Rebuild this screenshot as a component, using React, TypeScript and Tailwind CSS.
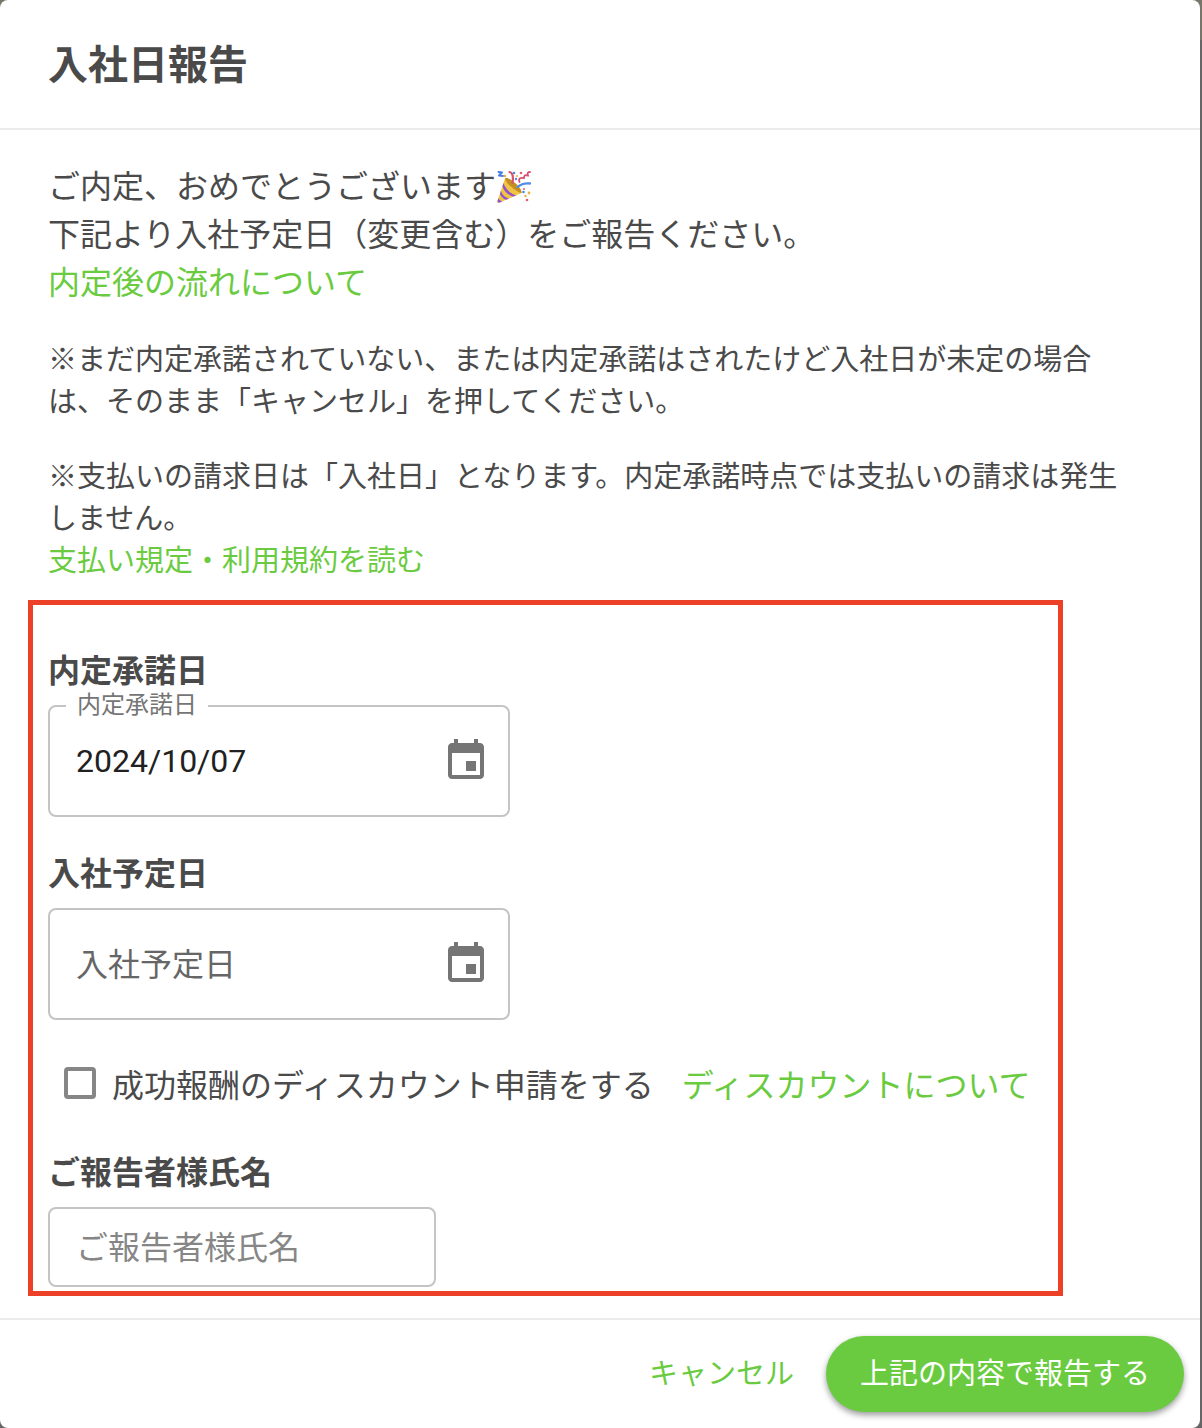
import { useState } from "react";
import type { ReactNode } from "react";

function CalendarIcon() {
  return (
    <svg viewBox="0 0 24 24" className="size-12 fill-[#757575]" aria-hidden="true">
      <path d="M12 12h5v5h-5zM19 3h-1V1h-2v2H8V1H6v2H5c-1.11 0-2 .9-2 2v14c0 1.1.89 2 2 2h14c1.1 0 2-.9 2-2V5c0-1.1-.9-2-2-2zm0 16H5V8h14v11z" />
    </svg>
  );
}

function PartyPopper() {
  return (
    <svg viewBox="0 0 36 36" className="inline-block size-9 align-[-6px]" role="img" aria-label="クラッカー">
      <path d="M1.5 33 9 10.5C10 8.500 26 20 25.500 25L4 34.500C2 35 1 34.500 1.500 33Z" fill="#f0c544" />
      <path d="M9 10.500C11 7 27 20 25.500 25C22 25 9 15 9 10.500Z" fill="#c58f22" />
      <path d="M7.500 15C9 20 14 26 20.500 27.300L17.500 28.600C12 27.500 7.500 22.500 6.500 18.200Z" fill="#9050cf" />
      <path d="M4.900 22.800C6 26.500 9 30 13.300 30.500L10.300 31.800C7.500 31 5 28.500 3.900 26Z" fill="#9050cf" />
      <path d="M2.500 30C3.300 31.800 4.500 33 6.500 33.500L3.500 34.600C1.800 34.800 1.200 33.500 1.700 32.500Z" fill="#9050cf" />
      <path d="M13.500 4C17 4.500 17.500 10 16.500 15" fill="none" stroke="#dc5368" strokeWidth="2.200" strokeLinecap="round" />
      <path d="M21.500 19C25 16 29 15 34 15.500" fill="none" stroke="#4e8fe6" strokeWidth="2.300" strokeLinecap="round" />
      <path d="M2.500 4 6 4.500 3 7.500 7 8" fill="none" stroke="#477fe0" strokeWidth="2" strokeLinecap="round" strokeLinejoin="round" />
      <path d="M23.500 14C22 10 25 9.500 28 10C28 6 30 7.500 32 7.500C31 5 32 4 34 4" fill="none" stroke="#d94f73" strokeWidth="1.800" strokeLinecap="round" />
      <g fill="#e25d6d">
        <circle cx="31" cy="32" r="1.300" />
        <circle cx="25" cy="5" r="1.300" />
        <circle cx="28" cy="21" r="1" />
      </g>
      <g fill="#e7b33f">
        <circle cx="9" cy="8" r="1.300" />
        <circle cx="33" cy="25" r="1.400" />
        <circle cx="29.500" cy="28" r="1.200" />
        <circle cx="21" cy="8" r="1" />
      </g>
      <g fill="#4e8be0">
        <circle cx="18" cy="5" r="1.300" />
        <circle cx="20" cy="11" r="1.200" />
        <circle cx="27.500" cy="24" r="1.300" />
      </g>
    </svg>
  );
}

function TextLink({ children }: { children: ReactNode }) {
  return (
    <a href="#" className="text-[#6acb40] hover:underline">
      {children}
    </a>
  );
}

type DateFieldProps = {
  id: string;
  label: string;
  value: string;
  onChange: (value: string) => void;
};

function DateField({ id, label, value, onChange }: DateFieldProps) {
  return (
    <div>
      <h2 className="text-[32px] leading-10 font-bold">{label}</h2>
      <div className="relative mt-[17px] flex h-28 w-[462px] items-center rounded-lg border-2 border-[#c4c4c4] pr-[18px] pl-[26px]">
        {/* floats up onto the border once the field has a value */}
        <label
          htmlFor={id}
          className={
            value
              ? "absolute -top-[18px] left-4 bg-white px-[11px] text-2xl leading-7 text-[#757575]"
              : "absolute top-7 left-[26px] text-[32px] leading-12 text-[#666666]"
          }
        >
          {label}
        </label>
        <input
          id={id}
          type="text"
          value={value}
          onChange={(e) => onChange(e.target.value)}
          className="h-12 min-w-0 flex-1 font-[Roboto,'Noto_Sans_CJK_JP',sans-serif] text-[32px] text-[#212121] outline-none"
        />
        <button type="button" aria-label={`${label}を選択`}>
          <CalendarIcon />
        </button>
      </div>
    </div>
  );
}

export default function App() {
  const [acceptedDate, setAcceptedDate] = useState("2024/10/07");
  const [joinDate, setJoinDate] = useState("");
  const [discount, setDiscount] = useState(false);
  const [reporter, setReporter] = useState("");

  return (
    <div className="min-h-screen bg-[linear-gradient(#77756a_40px,#666666_40px)] pr-0.5 font-['Noto_Sans_CJK_JP',sans-serif] text-[#4a4a4a]">
      <form
        role="dialog"
        aria-labelledby="dialog-title"
        className="flex min-h-screen flex-col rounded-lg bg-white"
        onSubmit={(e) => e.preventDefault()}
      >
        <header className="border-b-2 border-[#ebebeb] px-12 pt-[30px] pb-[34px]">
          <h1 id="dialog-title" className="text-[40px] leading-16 font-bold">
            入社日報告
          </h1>
        </header>

        <main className="flex-1 px-12 pt-[30px] pb-[22px]">
          <p className="text-[32px] leading-12">
            ご内定、おめでとうございます
            <PartyPopper />
            <br />
            下記より入社予定日（変更含む）をご報告ください。
            <br />
            <TextLink>内定後の流れについて</TextLink>
          </p>

          <div className="mt-8 space-y-[33px] pr-4 text-[29px] leading-[42px]">
            <p>
              ※まだ内定承諾されていない、または内定承諾はされたけど入社日が未定の場合は、そのまま「キャンセル」を押してください。
            </p>
            <p>
              ※支払いの請求日は「入社日」となります。内定承諾時点では支払いの請求は発生しません。
              <br />
              <TextLink>支払い規定・利用規約を読む</TextLink>
            </p>
          </div>

          <section className="mt-[21px] -ml-5 max-w-[1035px] border-5 border-[#ec4126] pt-[43px] pb-1 pl-[15px]">
            <DateField id="accepted-date" label="内定承諾日" value={acceptedDate} onChange={setAcceptedDate} />
            <div className="mt-[34px]">
              <DateField id="join-date" label="入社予定日" value={joinDate} onChange={setJoinDate} />
            </div>

            <div className="mt-[39px] flex items-center gap-7 pl-4 text-[32px] leading-12">
              <label className="flex items-center gap-4">
                <input
                  type="checkbox"
                  checked={discount}
                  onChange={(e) => setDiscount(e.target.checked)}
                  className="size-8 appearance-none rounded-sm border-4 border-[#868686] checked:border-[#6acb40] checked:bg-[#6acb40]"
                />
                成功報酬のディスカウント申請をする
              </label>
              <TextLink>ディスカウントについて</TextLink>
            </div>

            <div className="mt-[43px]">
              <label htmlFor="reporter" className="block text-[32px] leading-10 font-bold">
                ご報告者様氏名
              </label>
              <input
                id="reporter"
                type="text"
                value={reporter}
                placeholder="ご報告者様氏名"
                onChange={(e) => setReporter(e.target.value)}
                className="mt-[17px] block h-20 w-[388px] rounded-lg border-2 border-[#c4c4c4] px-[26px] pb-1 text-[32px] outline-none placeholder:text-[#868686]"
              />
            </div>
          </section>
        </main>

        <footer className="flex items-center justify-end gap-4 border-t-2 border-[#ebebeb] p-4 text-[29px]">
          <button type="button" className="px-4 pb-1 text-[#6acb40]">
            キャンセル
          </button>
          <button
            type="submit"
            className="h-[76px] rounded-full bg-[#6acb40] px-[34px] pb-1 text-white shadow-[0_3px_6px_rgba(0,0,0,0.4)]"
          >
            上記の内容で報告する
          </button>
        </footer>
      </form>
    </div>
  );
}
